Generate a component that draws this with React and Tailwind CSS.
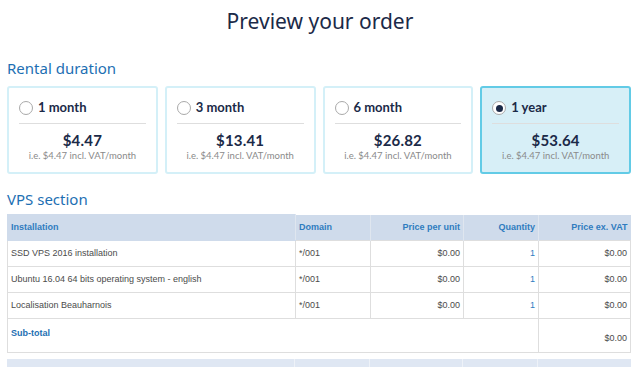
const plans = [
  { label: "1 month", price: "$4.47" },
  { label: "3 month", price: "$13.41" },
  { label: "6 month", price: "$26.82" },
  { label: "1 year", price: "$53.64", selected: true },
];

const rows = [
  { name: "SSD VPS 2016 installation", domain: "*/001", unit: "$0.00", qty: "1", total: "$0.00" },
  { name: "Ubuntu 16.04 64 bits operating system - english", domain: "*/001", unit: "$0.00", qty: "1", total: "$0.00" },
  { name: "Localisation Beauharnois", domain: "*/001", unit: "$0.00", qty: "1", total: "$0.00" },
];

function PlanCard({ plan }) {
  return (
    <div
      className={
        plan.selected
          ? "flex-1 h-[88px] rounded-[3px] border-2 border-[#62cbe6] bg-[#d7eff7] px-[10px] pt-[11px]"
          : "flex-1 h-[88px] rounded-[3px] border-2 border-[#d4f0f8] bg-white px-[10px] pt-[11px]"
      }
    >
      <div className="flex items-center gap-[5px] h-[18px]">
        <span className="w-[14px] h-[14px] rounded-full border border-[#a9a9a9] bg-white flex items-center justify-center">
          {plan.selected && <span className="w-[7px] h-[7px] rounded-full bg-[#1b2a48]" />}
        </span>
        <span className="font-['Lato',sans-serif] text-[13px] font-bold text-[#1b2a48]">{plan.label}</span>
      </div>
      <div className="mt-[6px] border-t border-[#dedede]" />
      <div className="mt-[6px] text-center font-['Lato',sans-serif] text-[15px] font-bold tracking-[0.2px] text-[#1b2a48] leading-[20px]">
        {plan.price}
      </div>
      <div className="text-center font-['Lato',sans-serif] text-[9.5px] text-[#8a8a8a] leading-[12px]">
        i.e. $4.47 incl. VAT/month
      </div>
    </div>
  );
}

export default function App() {
  return (
    <div className="w-[640px] h-[367px] overflow-hidden bg-white font-['DejaVu_Sans',sans-serif]">
      <h1 className="pt-[6px] text-center font-['Noto_Sans',sans-serif] text-[21px] leading-[30px] text-[#1b2a48]">
        Preview your order
      </h1>

      <section className="pl-[7px] pr-[9px]">
        <h2 className="mt-[22px] font-['Noto_Sans',sans-serif] text-[15px] leading-[20px] text-[#1d6fb3]">
          Rental duration
        </h2>
        <div className="mt-[8px] flex gap-[7px]">
          {plans.map((p) => (
            <PlanCard key={p.label} plan={p} />
          ))}
        </div>

        <h2 className="mt-[15px] font-['Noto_Sans',sans-serif] text-[15px] leading-[20px] text-[#1d6fb3]">
          VPS section
        </h2>
        <table className="mt-[5px] w-full border-collapse text-[9px] text-[#4b4b4b] font-['Liberation_Sans',sans-serif]">
          <thead>
            <tr className="h-[26px] bg-[#cfdbeb] text-[#2f7cbf] font-bold">
              <th className="w-[288px] border border-[#cfdbeb] border-r-[#dfe6ef] px-[3px] text-left font-bold">Installation</th>
              <th className="w-[75px] border-r border-[#dfe6ef] px-[3px] text-left font-bold">Domain</th>
              <th className="w-[93px] border-r border-[#dfe6ef] px-[3px] text-right font-bold">Price per unit</th>
              <th className="w-[75px] border-r border-[#dfe6ef] px-[3px] text-right font-bold">Quantity</th>
              <th className="px-[3px] text-right font-bold">Price ex. VAT</th>
            </tr>
          </thead>
          <tbody>
            {rows.map((r) => (
              <tr key={r.name} className="h-[26px]">
                <td className="border border-[#dedede] px-[3px]">{r.name}</td>
                <td className="border border-[#dedede] px-[3px]">{r.domain}</td>
                <td className="border border-[#dedede] px-[3px] text-right">{r.unit}</td>
                <td className="border border-[#dedede] px-[3px] text-right text-[#2f7cbf]">{r.qty}</td>
                <td className="border border-[#dedede] px-[3px] text-right">{r.total}</td>
              </tr>
            ))}
            <tr className="h-[34px]">
              <td colSpan={4} className="border border-[#dedede] px-[3px] align-top pt-[8px] font-bold text-[#1d6fb3]">
                Sub-total
              </td>
              <td className="border border-[#dedede] px-[3px] text-right align-bottom pb-[7px]">$0.00</td>
            </tr>
          </tbody>
        </table>

        <div className="mt-[6px] flex h-[10px] bg-[#dfe7f3]">
          <div className="w-[288px] border-r border-[#eef2f8]" />
          <div className="w-[75px] border-r border-[#eef2f8]" />
          <div className="w-[93px] border-r border-[#eef2f8]" />
          <div className="w-[75px] border-r border-[#eef2f8]" />
          <div className="flex-1" />
        </div>
      </section>
    </div>
  );
}
